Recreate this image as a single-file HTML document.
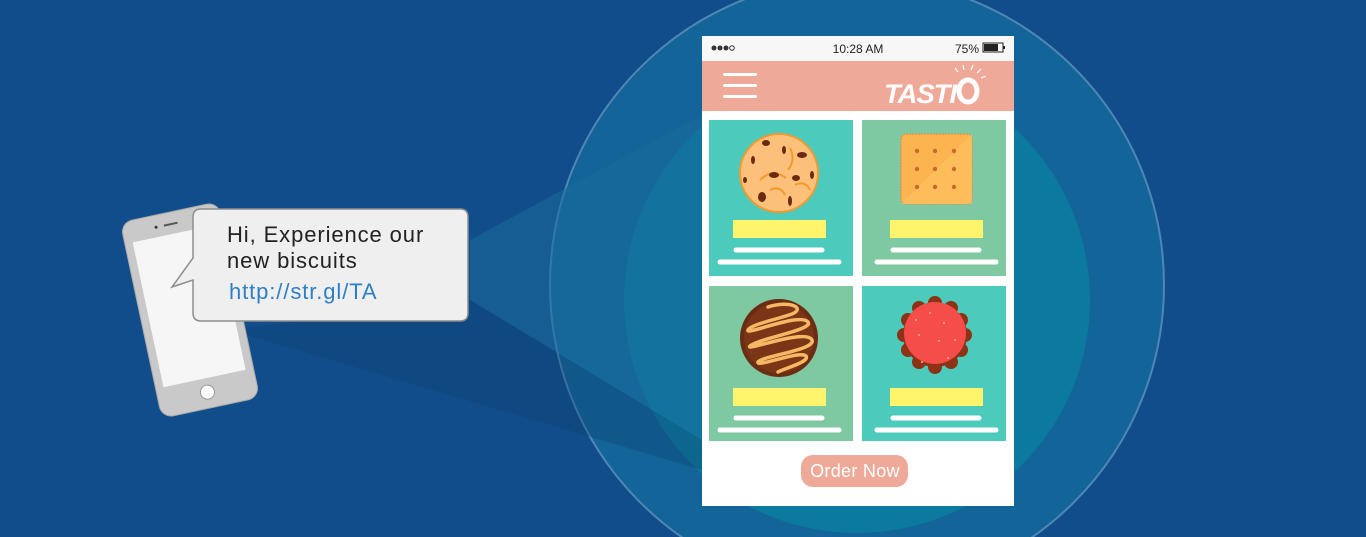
<!DOCTYPE html>
<html><head><meta charset="utf-8"><style>
html,body{margin:0;padding:0;width:1366px;height:537px;overflow:hidden;background:#124d8b;font-family:"Liberation Sans",sans-serif}
svg{display:block}
</style></head><body>
<svg width="1366" height="537" viewBox="0 0 1366 537" xmlns="http://www.w3.org/2000/svg">
<rect width="1366" height="537" fill="#124d8b"/>
<circle cx="857" cy="285" r="307" fill="#136498" stroke="#4f87b4" stroke-width="2"/>
<circle cx="857" cy="300" r="233" fill="#0c7a9f"/>
<polygon points="470,240 702,115 702,440 470,300" fill="#1a6c9d" opacity="0.55"/>
<polygon points="230,330 470,300 702,440 702,470" fill="#0d416f" opacity="0.35"/>
<g transform="rotate(-12 190 310)">
<rect x="140" y="210" width="100" height="200" rx="12" fill="#c9c9c9" stroke="#aaa"/>
<rect x="148" y="232" width="84" height="148" fill="#f6f6f6"/>
<circle cx="190" cy="394" r="7" fill="#fff" stroke="#999"/>
<rect x="182" y="221" width="14" height="2" fill="#555"/>
<circle cx="174" cy="222" r="1.5" fill="#333"/>
</g>
<path d="M201,209 H460 Q468,209 468,217 V313 Q468,321 460,321 H201 Q193,321 193,313 V280 L172,287 L193,258 V217 Q193,209 201,209 Z" fill="#efefef" stroke="#8e8e8e" stroke-width="1.5"/>
<text x="227" y="242" font-size="22" letter-spacing="0.9" fill="#222">Hi, Experience our</text>
<text x="227" y="268" font-size="22" letter-spacing="0.9" fill="#222">new biscuits</text>
<text x="229" y="299" font-size="22" letter-spacing="0.9" fill="#2e7fc6">http://str.gl/TA</text>
<rect x="702" y="36" width="312" height="470" fill="#fff"/>
<rect x="702" y="36" width="312" height="25" fill="#f7f7f7"/>
<g fill="#333"><circle cx="714" cy="48" r="2.5"/><circle cx="720" cy="48" r="2.5"/><circle cx="726" cy="48" r="2.5"/></g>
<circle cx="732" cy="48" r="2.3" fill="none" stroke="#333"/>
<text x="858" y="53" font-size="12" fill="#222" text-anchor="middle">10:28 AM</text>
<text x="955" y="53" font-size="12" fill="#222">75%</text>
<rect x="983" y="43" width="20" height="9" fill="none" stroke="#222"/><rect x="984" y="44" width="14" height="7" fill="#222"/><rect x="1003" y="46" width="2" height="3" fill="#222"/>
<rect x="702" y="61" width="312" height="50" fill="#eea998"/>
<g fill="#fff"><rect x="723" y="73" width="34" height="3" rx="1.5"/><rect x="723" y="84" width="34" height="3" rx="1.5"/><rect x="723" y="95" width="34" height="3" rx="1.5"/></g>
<text x="884" y="103" font-size="27" font-weight="bold" font-style="italic" fill="#fff" letter-spacing="-1" textLength="72" lengthAdjust="spacingAndGlyphs">TASTI</text>
<ellipse cx="968" cy="91" rx="9" ry="11" fill="none" stroke="#fff" stroke-width="5"/>
<g stroke="#fff" stroke-width="1.2"><line x1="958" y1="72" x2="955" y2="68"/><line x1="964" y1="70" x2="963" y2="65"/><line x1="971" y1="70" x2="973" y2="65"/><line x1="977" y1="73" x2="981" y2="69"/><line x1="981" y1="78" x2="986" y2="76"/></g>
<rect x="709" y="120" width="144" height="156" fill="#4ccbbc"/>
<rect x="862" y="120" width="144" height="156" fill="#7ec9a2"/>
<rect x="709" y="286" width="144" height="155" fill="#7ec9a2"/>
<rect x="862" y="286" width="144" height="155" fill="#4ccbbc"/>
<g fill="#fff46c"><rect x="733" y="220" width="93" height="18"/><rect x="890" y="220" width="93" height="18"/><rect x="733" y="388" width="93" height="18"/><rect x="890" y="388" width="93" height="18"/></g>
<g stroke="#fff" stroke-width="5" stroke-linecap="round">
<line x1="736" y1="250" x2="822" y2="250"/><line x1="720" y1="262" x2="839" y2="262"/>
<line x1="893" y1="250" x2="979" y2="250"/><line x1="877" y1="262" x2="996" y2="262"/>
<line x1="736" y1="418" x2="822" y2="418"/><line x1="720" y1="430" x2="839" y2="430"/>
<line x1="893" y1="418" x2="979" y2="418"/><line x1="877" y1="430" x2="996" y2="430"/>
</g>
<circle cx="779" cy="173" r="39" fill="#fcc07a" stroke="#f29a2e" stroke-width="2"/>
<path d="M760,180 Q772,168 786,178 M790,148 Q796,160 788,170 M770,190 Q780,185 785,195 M795,185 Q805,180 810,190" stroke="#f29a2e" stroke-width="2" fill="none"/>
<g fill="#6b2a12"><ellipse cx="766" cy="143" rx="4" ry="3"/><ellipse cx="784" cy="150" rx="2" ry="4"/><ellipse cx="802" cy="155" rx="5" ry="3"/><ellipse cx="753" cy="160" rx="2" ry="4"/><ellipse cx="774" cy="175" rx="5" ry="3"/><ellipse cx="796" cy="178" rx="4" ry="3"/><ellipse cx="812" cy="175" rx="2" ry="4"/><ellipse cx="762" cy="197" rx="4" ry="5"/><ellipse cx="790" cy="201" rx="2" ry="5"/><ellipse cx="745" cy="180" rx="2" ry="3"/></g>
<rect x="901" y="134" width="71" height="70" rx="5" fill="#fbb44f" stroke="#e9853a" stroke-dasharray="2 1"/>
<polygon points="901,204 972,134 972,204" fill="#fcc060" opacity="0.7"/>
<g fill="#c9692e"><circle cx="917" cy="151" r="2.2"/><circle cx="935" cy="151" r="2.2"/><circle cx="954" cy="151" r="2.2"/><circle cx="917" cy="169" r="2.2"/><circle cx="935" cy="169" r="2.2"/><circle cx="954" cy="169" r="2.2"/><circle cx="917" cy="187" r="2.2"/><circle cx="935" cy="187" r="2.2"/><circle cx="954" cy="187" r="2.2"/></g>
<circle cx="779" cy="338" r="39" fill="#6a2c12"/>
<circle cx="779" cy="338" r="35" fill="#7a3616"/>
<g stroke="#f7b865" stroke-width="3.5" fill="none" stroke-linecap="round">
<path d="M768,307 C790,300 806,308 792,314 C775,320 752,324 748,330 C745,336 800,312 808,322 C814,330 760,338 750,346 C744,352 806,328 812,340 C816,350 762,356 758,362 C756,368 800,350 806,356 C810,362 785,368 778,372"/>
</g>
<g fill="#8c3316"><circle cx="935" cy="303" r="7"/><circle cx="951" cy="308" r="7"/><circle cx="961" cy="320" r="7"/><circle cx="965" cy="335" r="7"/><circle cx="961" cy="350" r="7"/><circle cx="951" cy="362" r="7"/><circle cx="935" cy="367" r="7"/><circle cx="919" cy="362" r="7"/><circle cx="908" cy="350" r="7"/><circle cx="904" cy="335" r="7"/><circle cx="908" cy="320" r="7"/><circle cx="919" cy="308" r="7"/><circle cx="935" cy="335" r="32"/></g>
<circle cx="935" cy="333" r="31" fill="#f44d4a"/>
<g fill="#fdb07a"><circle cx="930" cy="313" r="1"/><circle cx="944" cy="323" r="1"/><circle cx="919" cy="335" r="1"/><circle cx="939" cy="341" r="1"/><circle cx="955" cy="340" r="1"/><circle cx="922" cy="362" r="1"/><circle cx="948" cy="358" r="1"/><circle cx="916" cy="320" r="1"/></g>
<rect x="801" y="455" width="107" height="32" rx="12" fill="#eea998"/>
<text x="855" y="477" font-size="18" fill="#fff" text-anchor="middle" letter-spacing="0.3">Order Now</text>
</svg>
</body></html>
